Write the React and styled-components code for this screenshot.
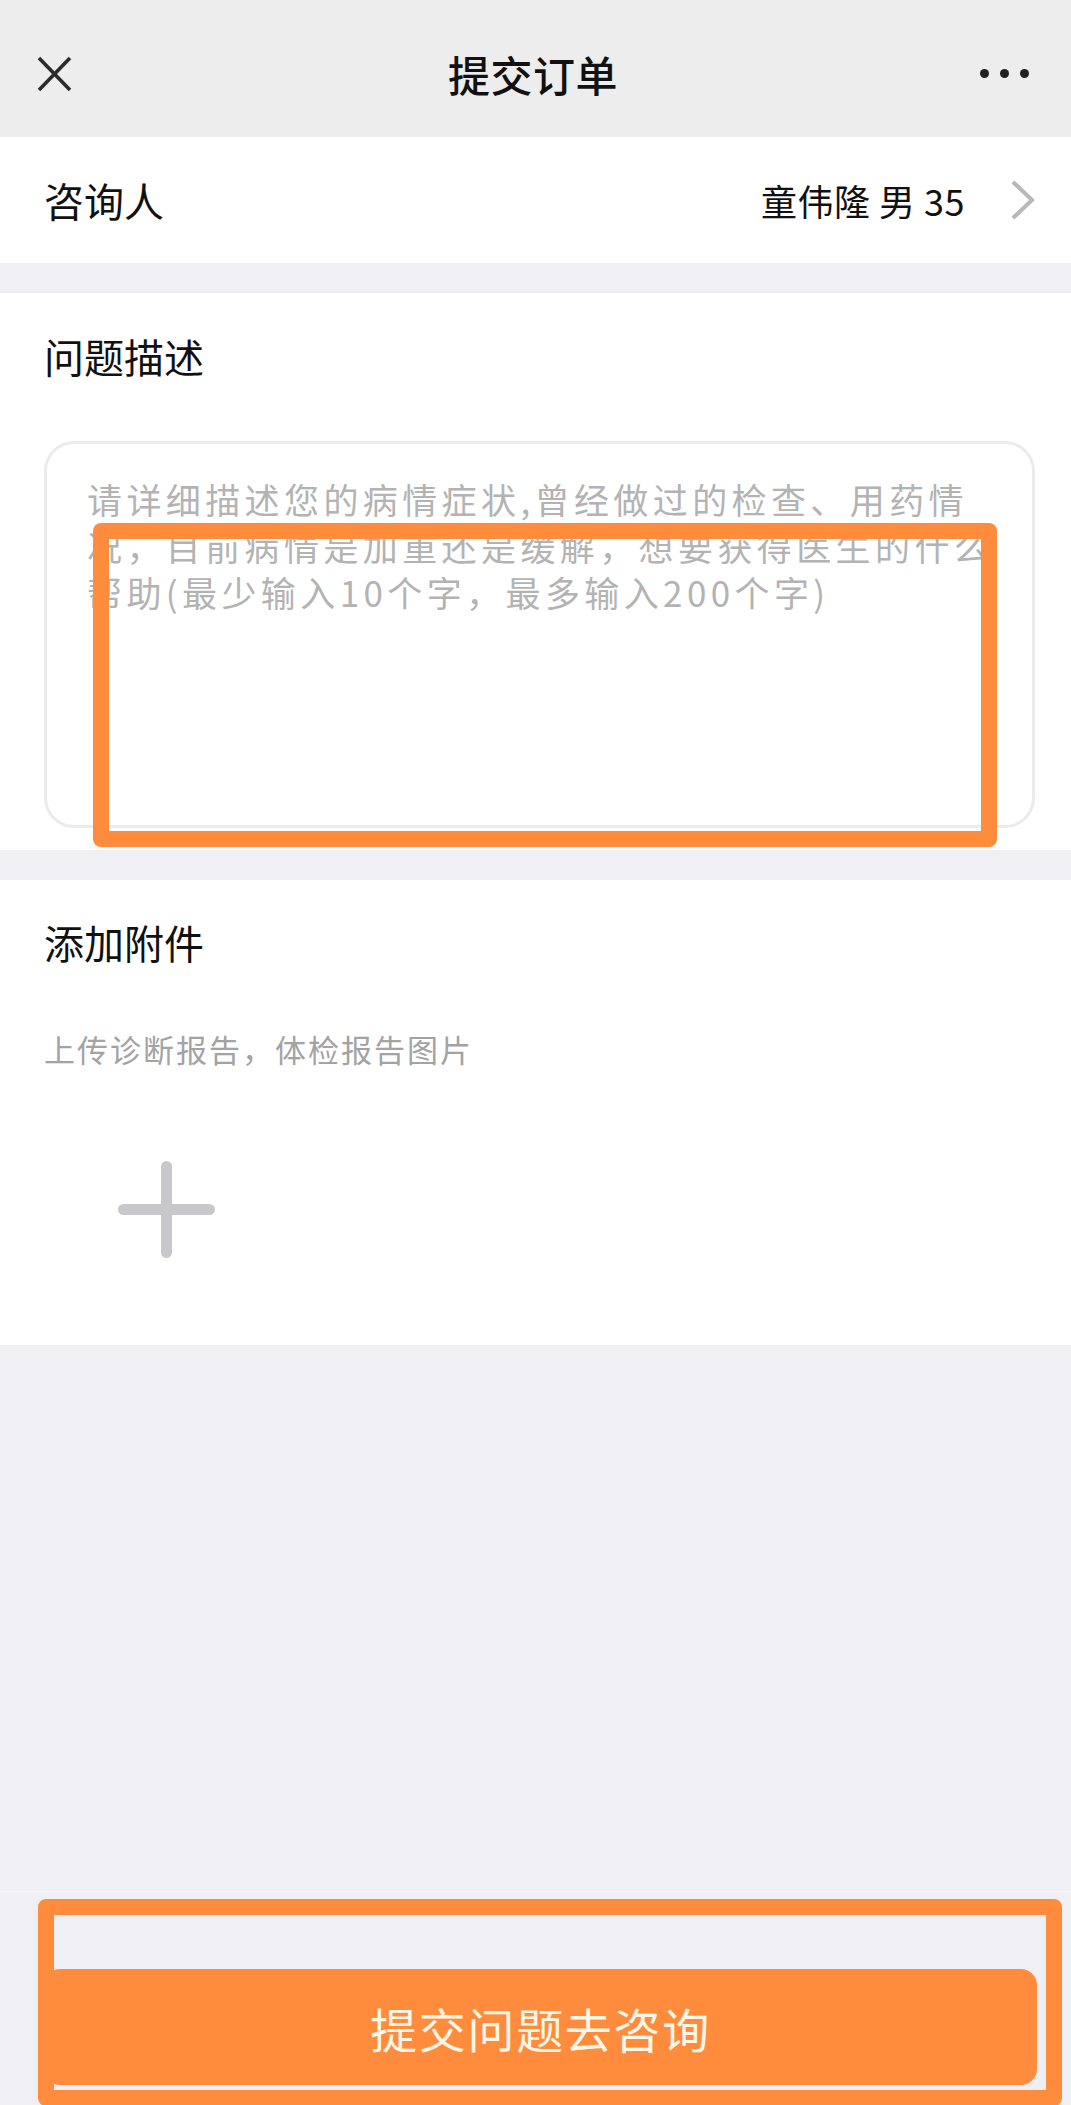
import React from "react";
import styled, { createGlobalStyle } from "styled-components";

const GlobalStyle = createGlobalStyle`
  html, body {
    margin: 0;
    padding: 0;
    background: #efeff4;
  }
  body {
    font-family: "Noto Sans CJK SC", "Noto Sans", sans-serif;
    color: #111;
  }
  * {
    box-sizing: border-box;
  }
`;

const App = () => {
  return (
    <Page>
      <GlobalStyle />
      <Header>
        <IconButton aria-label="close">
          <svg width="35" height="36" viewBox="0 0 35 36">
            <path d="M2 2 L33 34 M33 2 L2 34" stroke="#2b2b2b" strokeWidth="3.6" fill="none" />
          </svg>
        </IconButton>
        <Title>提交订单</Title>
        <MoreButton aria-label="more">
          <Dot />
          <Dot />
          <Dot />
        </MoreButton>
      </Header>

      <Row>
        <Label>咨询人</Label>
        <RowRight>
          <Value>童伟隆 男 35</Value>
          <svg width="25" height="42" viewBox="0 0 25 42">
            <polyline points="3,3 22,21 3,39" stroke="#b8b8b8" strokeWidth="4" fill="none" />
          </svg>
        </RowRight>
      </Row>

      <Section $pad="35px 36px 22px 44px">
        <SectionTitle>问题描述</SectionTitle>
        <Textarea placeholder="请详细描述您的病情症状,曾经做过的检查、用药情况，目前病情是加重还是缓解，想要获得医生的什么帮助(最少输入10个字，最多输入200个字)" />
        <Highlight $top={230} $left={93} $width={904} $height={324} />
      </Section>

      <Section $pad="34px 36px 87px 44px">
        <SectionTitle>添加附件</SectionTitle>
        <Hint>上传诊断报告，体检报告图片</Hint>
        <AddButton aria-label="add">
          <svg width="97" height="97" viewBox="0 0 97 97">
            <path d="M48.5 5.5 V91.5 M5.5 48.5 H91.5" stroke="#c8c8cc" strokeWidth="11" strokeLinecap="round" fill="none" />
          </svg>
        </AddButton>
      </Section>

      <Footer>
        <SubmitButton type="button">提交问题去咨询</SubmitButton>
        <Highlight $top={7} $left={38} $width={1024} $height={207} />
      </Footer>
    </Page>
  );
};

const Page = styled.div`
  min-height: 100vh;
  display: flex;
  flex-direction: column;
  background: #efeff4;
`;

const Header = styled.header`
  height: 137px;
  padding: 10px 42px 0 37px;
  display: grid;
  grid-template-columns: 1fr auto 1fr;
  align-items: center;
  background: #ededed;
`;

const IconButton = styled.button`
  justify-self: start;
  display: flex;
  padding: 0;
  border: none;
  background: transparent;
  cursor: pointer;
`;

const Title = styled.h1`
  margin: 0;
  font-size: 42px;
  font-weight: 500;
  line-height: 56px;
  letter-spacing: 0.5px;
  color: #111;
`;

const MoreButton = styled.button`
  justify-self: end;
  display: flex;
  gap: 11px;
  padding: 0;
  border: none;
  background: transparent;
  cursor: pointer;
`;

const Dot = styled.span`
  width: 9px;
  height: 9px;
  border-radius: 50%;
  background: #222;
`;

const Row = styled.div`
  height: 126px;
  padding: 0 36px 0 44px;
  display: flex;
  align-items: center;
  justify-content: space-between;
  background: #fff;
`;

const Label = styled.span`
  font-size: 40px;
  color: #111;
`;

const RowRight = styled.div`
  display: flex;
  align-items: center;
  gap: 45px;
`;

const Value = styled.span`
  font-size: 36px;
  letter-spacing: 0.5px;
  color: #111;
  white-space: pre;
`;

const Section = styled.section`
  position: relative;
  margin-top: 30px;
  padding: ${(p) => p.$pad};
  background: #fff;
`;

const SectionTitle = styled.h2`
  margin: 0;
  font-size: 40px;
  font-weight: 400;
  line-height: 56px;
  color: #111;
`;

const Textarea = styled.textarea`
  display: block;
  width: 100%;
  height: 387px;
  margin-top: 57px;
  padding: 32px 35px 0 40px;
  border: 3px solid #ebebeb;
  border-radius: 30px;
  font-family: "Noto Sans CJK SC", sans-serif;
  font-size: 35px;
  letter-spacing: 4.4px;
  line-height: 46.5px;
  color: #333;
  resize: none;
  outline: none;
  &::placeholder {
    color: #b3b3b3;
  }
`;

const Hint = styled.p`
  margin: 59px 0 0;
  font-size: 31px;
  letter-spacing: 2px;
  line-height: 40px;
  color: #a3a3a3;
`;

const AddButton = styled.button`
  display: flex;
  margin: 92px 0 0 74px;
  padding: 0;
  border: none;
  background: transparent;
  cursor: pointer;
`;

const Footer = styled.footer`
  position: relative;
  margin-top: auto;
  padding: 77px 34px 20px 44px;
  border-top: 1px solid #f7f7fb;
`;

const SubmitButton = styled.button`
  display: block;
  width: 100%;
  height: 116px;
  border: none;
  border-radius: 16px;
  background: #ff8c3c;
  color: #fff6e8;
  font-family: "Noto Sans CJK SC", sans-serif;
  font-size: 47px;
  letter-spacing: 1.7px;
  cursor: pointer;
`;

const Highlight = styled.div`
  position: absolute;
  top: ${(p) => p.$top}px;
  left: ${(p) => p.$left}px;
  width: ${(p) => p.$width}px;
  height: ${(p) => p.$height}px;
  border: 16px solid #ff8c3c;
  border-radius: 8px;
  pointer-events: none;
`;

export default App;
